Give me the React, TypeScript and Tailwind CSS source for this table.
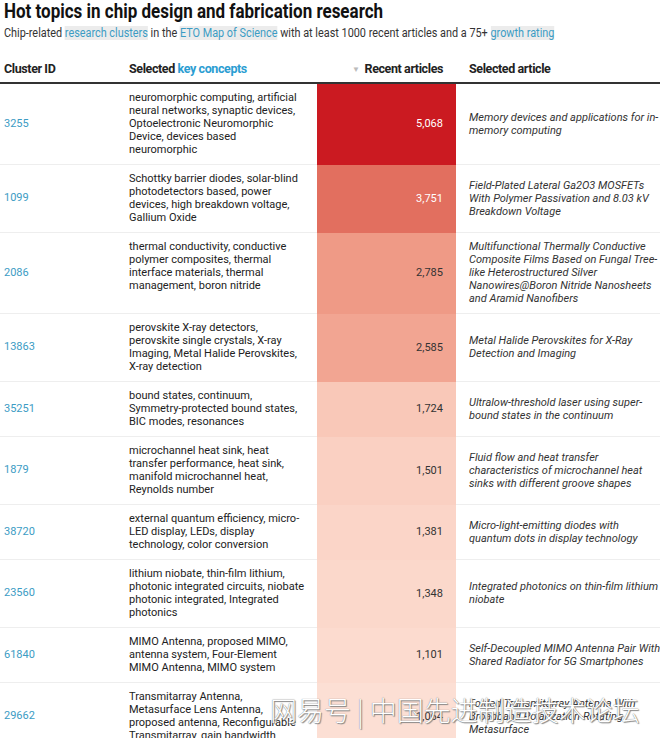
const rows = [
  {
    id: "3255",
    concepts: "neuromorphic computing, artificial neural networks, synaptic devices, Optoelectronic Neuromorphic Device, devices based neuromorphic",
    count: "5,068",
    bg: "bg-[#cb1a21]",
    light: true,
    article: "Memory devices and applications for in-memory computing",
  },
  {
    id: "1099",
    concepts: "Schottky barrier diodes, solar-blind photodetectors based, power devices, high breakdown voltage, Gallium Oxide",
    count: "3,751",
    bg: "bg-[#e26f5f]",
    light: true,
    article: "Field-Plated Lateral Ga2O3 MOSFETs With Polymer Passivation and 8.03 kV Breakdown Voltage",
  },
  {
    id: "2086",
    concepts: "thermal conductivity, conductive polymer composites, thermal interface materials, thermal management, boron nitride",
    count: "2,785",
    bg: "bg-[#ef9a86]",
    article: "Multifunctional Thermally Conductive Composite Films Based on Fungal Tree-like Heterostructured Silver Nanowires@Boron Nitride Nanosheets and Aramid Nanofibers",
  },
  {
    id: "13863",
    concepts: "perovskite X-ray detectors, perovskite single crystals, X-ray Imaging, Metal Halide Perovskites, X-ray detection",
    count: "2,585",
    bg: "bg-[#f2a592]",
    article: "Metal Halide Perovskites for X-Ray Detection and Imaging",
  },
  {
    id: "35251",
    concepts: "bound states, continuum, Symmetry-protected bound states, BIC modes, resonances",
    count: "1,724",
    bg: "bg-[#f9c8b8]",
    article: "Ultralow-threshold laser using super-bound states in the continuum",
  },
  {
    id: "1879",
    concepts: "microchannel heat sink, heat transfer performance, heat sink, manifold microchannel heat, Reynolds number",
    count: "1,501",
    bg: "bg-[#fad0c2]",
    article: "Fluid flow and heat transfer characteristics of microchannel heat sinks with different groove shapes",
  },
  {
    id: "38720",
    concepts: "external quantum efficiency, micro-LED display, LEDs, display technology, color conversion",
    count: "1,381",
    bg: "bg-[#fbd5c8]",
    article: "Micro-light-emitting diodes with quantum dots in display technology",
  },
  {
    id: "23560",
    concepts: "lithium niobate, thin-film lithium, photonic integrated circuits, niobate photonic integrated, Integrated photonics",
    count: "1,348",
    bg: "bg-[#fbd8cb]",
    article: "Integrated photonics on thin-film lithium niobate",
  },
  {
    id: "61840",
    concepts: "MIMO Antenna, proposed MIMO, antenna system, Four-Element MIMO Antenna, MIMO system",
    count: "1,101",
    bg: "bg-[#fcdbcf]",
    article: "Self-Decoupled MIMO Antenna Pair With Shared Radiator for 5G Smartphones",
  },
  {
    id: "29662",
    concepts: "Transmitarray Antenna, Metasurface Lens Antenna, proposed antenna, Reconfigurable Transmitarray, gain bandwidth",
    count: "1,064",
    bg: "bg-[#fcdfd4]",
    article: "Folded Transmitarray Antenna With Broadband Polarization-Rotating Metasurface",
  },
];

const Link = ({ children }: { children: string }) => (
  <span className="bg-[#ececec] text-[#3c9cc4]">{children}</span>
);

export default function App() {
  return (
    <div className="relative w-[660px] h-[738px] overflow-hidden bg-white text-[#222] font-['Roboto',sans-serif]">
      <div className="pl-1 h-[22px] leading-[22px] text-[20px] font-bold text-[#111] whitespace-nowrap">
        <span className="inline-block origin-left scale-x-[0.85]">Hot topics in chip design and fabrication research</span>
      </div>
      <div className="pl-1 mt-[4px] h-[14px] leading-[14px] text-[12px] text-[#333] whitespace-nowrap">
        <span className="inline-block origin-left scale-x-[0.905]">
          Chip-related <Link>research clusters</Link> in the <Link>ETO Map of Science</Link> with at least 1000 recent articles and a 75+ <Link>growth rating</Link>
        </span>
      </div>

      <div className="mt-[14px] grid grid-cols-[125px_192px_139px_1fr]">
        <div className="pl-1 pb-[3px] pt-[6px] text-[12.5px] font-bold tracking-[-0.4px] border-b-2 border-[#333]">Cluster ID</div>
        <div className="pl-1 pb-[3px] pt-[6px] text-[12.5px] font-bold tracking-[-0.4px] border-b-2 border-[#333]">
          Selected <span className="text-[#2b9dd2]">key concepts</span>
        </div>
        <div className="pr-[13px] pb-[3px] pt-[6px] text-right text-[12.5px] font-bold tracking-[-0.4px] border-b-2 border-[#333]">
          <span className="text-[8px] text-[#bbb] mr-[5px] align-middle">▼</span>Recent articles
        </div>
        <div className="pl-[13px] pb-[3px] pt-[6px] text-[12.5px] font-bold tracking-[-0.4px] border-b-2 border-[#333]">Selected article</div>

        {rows.map((r) => (
          <div key={r.id} className="contents">
            <div className="pl-1 flex items-center text-[11px] text-[#3c9cc4] border-b border-[#eeeeee]">{r.id}</div>
            <div className="pl-1 py-[7.5px] border-b border-[#eeeeee]">
              <div className="w-[176px] text-[11px] leading-[13px] text-[#222]">{r.concepts}</div>
            </div>
            <div className={`${r.bg} pr-[13px] flex items-center justify-end text-[11px] ${r.light ? "text-white" : "text-[#333]"}`}>
              {r.count}
            </div>
            <div className="pl-[13px] py-[7.5px] flex items-center border-b border-[#eeeeee]">
              <div className="w-[194px] shrink-0 text-[11px] leading-[13px] italic text-[#333]">{r.article}</div>
            </div>
          </div>
        ))}
      </div>

      <div className="absolute left-[270px] top-[694px] text-[27px] leading-[32px] font-light text-white whitespace-nowrap font-['Noto_Sans_CJK_SC',sans-serif] [text-shadow:0_0_1px_#666,1px_1px_1px_#888]">
        网易号 | 中国先进制造技术论坛
      </div>
    </div>
  );
}
